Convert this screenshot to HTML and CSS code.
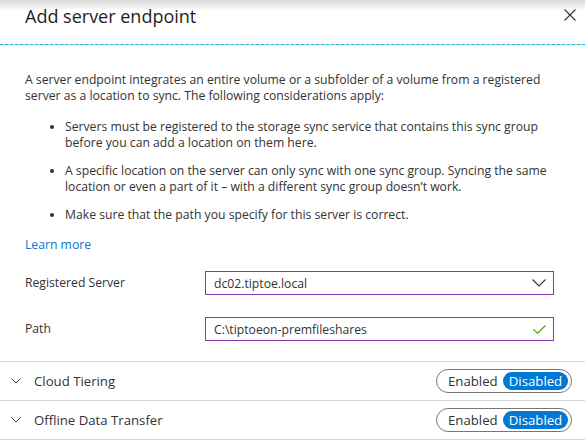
FILE: index.html
```html
<!DOCTYPE html>
<html>
<head>
    <meta charset="UTF-8">
    <title>Add server endpoint</title>
    <link rel="stylesheet" href="styles.css">
</head>
<body>

<div class="blade">
    <div class="blade-header">
        <h1 class="blade-title">Add server endpoint</h1>
        <a href="javascript:;" class="close">
            <svg width="12" height="12" viewBox="0 0 12 12"><path d="M0.5 0.5 L11.5 11.5 M11.5 0.5 L0.5 11.5" stroke="#333" stroke-width="1.1" fill="none"/></svg>
        </a>
    </div>

    <div class="blade-content">
        <p class="intro">A server endpoint integrates an entire volume or a subfolder of a volume from a registered server as a location to sync. The following considerations apply:</p>
        <ul class="notes">
            <li>Servers must be registered to the storage sync service that contains this sync group before you can add a location on them here.</li>
            <li>A specific location on the server can only sync with one sync group. Syncing the same location or even a part of it &ndash; with a different sync group doesn&#8217;t work.</li>
            <li>Make sure that the path you specify for this server is correct.</li>
        </ul>
        <a href="javascript:;" class="learn">Learn more</a>

        <div class="field">
            <label class="field-label">Registered Server</label>
            <div class="field-box">
                <span class="field-value">dc02.tiptoe.local</span>
                <svg width="14" height="8" viewBox="0 0 14 8"><path d="M0.5 0.5 L7 7 L13.5 0.5" stroke="#333" stroke-width="1.1" fill="none"/></svg>
            </div>
        </div>
        <div class="field">
            <label class="field-label">Path</label>
            <div class="field-box">
                <span class="field-value">C:\tiptoeon-premfileshares</span>
                <svg width="13" height="9" viewBox="0 0 13 9"><path d="M0.5 4.5 L4.5 8.2 L12.5 0.5" stroke="#57a300" stroke-width="1.2" fill="none"/></svg>
            </div>
        </div>
    </div>

    <div class="section">
        <svg class="chev" width="10" height="6" viewBox="0 0 10 6"><path d="M0.5 0.5 L5 5 L9.5 0.5" stroke="#333" stroke-width="1" fill="none"/></svg>
        <span class="section-title">Cloud Tiering</span>
        <div class="toggle">
            <span class="opt">Enabled</span>
            <span class="opt on">Disabled</span>
        </div>
    </div>
    <div class="section">
        <svg class="chev" width="10" height="6" viewBox="0 0 10 6"><path d="M0.5 0.5 L5 5 L9.5 0.5" stroke="#333" stroke-width="1" fill="none"/></svg>
        <span class="section-title">Offline Data Transfer</span>
        <div class="toggle">
            <span class="opt">Enabled</span>
            <span class="opt on">Disabled</span>
        </div>
    </div>
</div>

</body>
</html>
```

FILE: styles.css
```css
*{ margin: 0; padding: 0; box-sizing: border-box; text-decoration: none;}
body { background: #fff; font-family: "Open Sans", "Noto Sans", sans-serif; font-size: 12.2px; color: #333; width: 585px; height: 440px; overflow: hidden;}
.blade-header { height: 45px; display: flex; align-items: flex-start; justify-content: space-between; padding: 0 9px 0 25px; border-bottom: 1px dashed #00b7f0; background: linear-gradient(#d8d8d8, #fff 11px);}
.blade-title { font-size: 18px; font-weight: normal; color: #1e1e1e; line-height: 26px; padding-top: 3px;}
.close { display: block; margin-top: 9px; width: 12px; height: 12px;}
.close svg { display: block;}
.blade-content { padding: 27px 25px 20px 25px;}
.intro { line-height: 16px; width: 530px;}
.notes { list-style: disc; padding-left: 40px; margin-top: 15px; line-height: 16px;}
.notes li { margin-bottom: 12px; padding-right: 10px;}
.notes li:last-child { margin-bottom: 0;}
.learn { display: block; margin-top: 14px; line-height: 16px; color: #0078d4;}
.field { display: flex; align-items: center; margin-top: 18px;}
.field + .field { margin-top: 22px;}
.field-label { width: 180px; line-height: 16px;}
.field-box { width: 349px; height: 24px; border: 1px solid #8a36b0; display: flex; align-items: center; justify-content: space-between; padding: 0 7px 0 8px;}
.field-box svg { display: block;}
.section { height: 39px; border-top: 1px solid #d4d4d4; display: flex; align-items: center; padding: 0 13px 0 11px;}
.section:last-child { border-bottom: 1px solid #d4d4d4; height: 40px;}
.chev { display: block; margin-right: 13px;}
.section-title { font-size: 13.2px; flex: 1;}
.toggle { display: flex; align-items: center; width: 136px; height: 24px; border: 1px solid #767676; border-radius: 12px; padding: 0 3px 0 11px; justify-content: space-between;}
.opt { font-size: 13.2px; line-height: 18px;}
.opt.on { background: #0078d4; color: #fff; border-radius: 9px; width: 65px; text-align: center;}
```
